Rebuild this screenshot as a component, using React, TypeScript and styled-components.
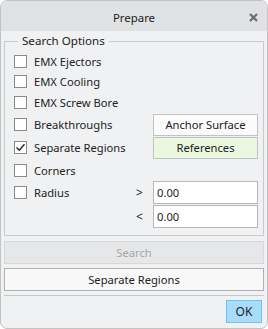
import React from "react";
import styled, { createGlobalStyle } from "styled-components";

const Global = createGlobalStyle`
  html, body { margin: 0; padding: 0; background: #ffffff; }
  body { font-family: "Segoe UI", "Noto Sans", "Open Sans", sans-serif; }
  * { box-sizing: border-box; }
`;

const Dialog = styled.div`
  width: 268px;
  height: 329px;
  border: 1px solid #c3c3c3;
  border-radius: 7px;
  background: #f0f1f2;
  display: flex;
  flex-direction: column;
  overflow: hidden;
  color: #222;
  font-size: 11.2px;
`;

const TitleBar = styled.div`
  height: 30px;
  flex: none;
  background: #dfe1e2;
  display: flex;
  align-items: center;
  justify-content: center;
  position: relative;
  font-size: 11.4px;
  padding-top: 2px;
  color: #222;
`;

const CloseButton = styled.span`
  position: absolute;
  right: 9px;
  top: 12px;
  width: 9px;
  height: 9px;
  display: flex;
`;

const Body = styled.div`
  flex: 1;
  display: flex;
  flex-direction: column;
  padding: 2px 3px 0 3px;
`;

const Group = styled.fieldset`
  margin: 0;
  padding: 2px 5px 7px 9px;
  border: 1px solid #c9cacb;
  min-width: 0;
  display: grid;
  grid-template-columns: 1fr 23px 105px;
  grid-template-rows: 20px 21px 21px 23px 23px 22px 23px 24px;
  align-items: center;
`;

const Legend = styled.legend`
  padding: 0 4px;
  margin-left: 4px;
  font-size: 11.6px;
  line-height: 16px;
  color: #222;
`;

const CheckRow = styled.label<{ $row: number }>`
  grid-column: 1;
  grid-row: ${(p) => p.$row};
  display: flex;
  align-items: center;
  gap: 7px;
  white-space: nowrap;
`;

const Box = styled.span`
  width: 13px;
  height: 13px;
  border: 1px solid #8a8a8a;
  background: #ffffff;
  display: flex;
  align-items: center;
  justify-content: center;
  flex: none;
`;

const Op = styled.span<{ $row: number }>`
  grid-column: 2;
  grid-row: ${(p) => p.$row};
  font-size: 12px;
  text-align: center;
  padding-right: 4px;
`;

const SideButton = styled.button<{ $row: number; $active?: boolean }>`
  grid-column: 3;
  grid-row: ${(p) => p.$row};
  height: 22px;
  margin: 0;
  padding: 0;
  font: inherit;
  color: #222;
  background: ${(p) => (p.$active ? "#e9f8df" : "#fbfbfb")};
  border: 1px solid #c2c2c2;
`;

const Field = styled.input<{ $row: number }>`
  grid-column: 3;
  grid-row: ${(p) => p.$row};
  height: 23px;
  margin: 0;
  padding: 0 3px;
  font: inherit;
  color: #222;
  background: #ffffff;
  border: 1px solid #b7b7b7;
  outline: none;
  align-self: ${(p) => (p.$row === 8 ? "end" : "center")};
`;

const WideButton = styled.button<{ $disabled?: boolean }>`
  height: 23px;
  margin: 0;
  padding: 0;
  font: inherit;
  color: ${(p) => (p.$disabled ? "#a6a6a6" : "#222")};
  background: ${(p) => (p.$disabled ? "#e6e7e8" : "#f8f8f8")};
  border: 1px solid ${(p) => (p.$disabled ? "#d7d8d9" : "#b0b0b0")};
`;

const Stack = styled.div`
  display: flex;
  flex-direction: column;
  gap: 4px;
  margin-top: 5px;
`;

const Footer = styled.div`
  margin-top: 4px;
  border-top: 1px solid #c6c7c8;
  display: flex;
  justify-content: flex-end;
  padding: 4px 2px 0 0;
`;

const OkButton = styled.button`
  width: 36px;
  height: 23px;
  margin: 0;
  padding: 0;
  font: inherit;
  font-size: 12px;
  color: #222;
  background: #a7dcfb;
  border: 1px solid #6cc4f5;
`;

const Check = () => (
  <svg width="11" height="11" viewBox="0 0 11 11">
    <path d="M1.5 5.5 L4.3 8.3 L9.5 2.2" fill="none" stroke="#222" strokeWidth="1.4" />
  </svg>
);

const rows: { label: string; checked?: boolean }[] = [
  { label: "EMX Ejectors" },
  { label: "EMX Cooling" },
  { label: "EMX Screw Bore" },
  { label: "Breakthroughs" },
  { label: "Separate Regions", checked: true },
  { label: "Corners" },
  { label: "Radius" },
];

export default function App() {
  return (
    <>
      <Global />
      <Dialog>
        <TitleBar>
          Prepare
          <CloseButton>
            <svg width="9" height="9" viewBox="0 0 9 9">
              <path d="M1 1 L8 8 M8 1 L1 8" stroke="#6b6b6b" strokeWidth="2.2" />
            </svg>
          </CloseButton>
        </TitleBar>
        <Body>
          <Group>
            <Legend>Search Options</Legend>
            {rows.map((r, i) => (
              <CheckRow key={r.label} $row={i + 1}>
                <Box>{r.checked && <Check />}</Box>
                {r.label}
              </CheckRow>
            ))}
            <SideButton $row={4}>Anchor Surface</SideButton>
            <SideButton $row={5} $active>
              References
            </SideButton>
            <Op $row={7}>&gt;</Op>
            <Field $row={7} defaultValue="0.00" />
            <Op $row={8}>&lt;</Op>
            <Field $row={8} defaultValue="0.00" />
          </Group>
          <Stack>
            <WideButton $disabled>Search</WideButton>
            <WideButton>Separate Regions</WideButton>
          </Stack>
          <Footer>
            <OkButton>OK</OkButton>
          </Footer>
        </Body>
      </Dialog>
    </>
  );
}
